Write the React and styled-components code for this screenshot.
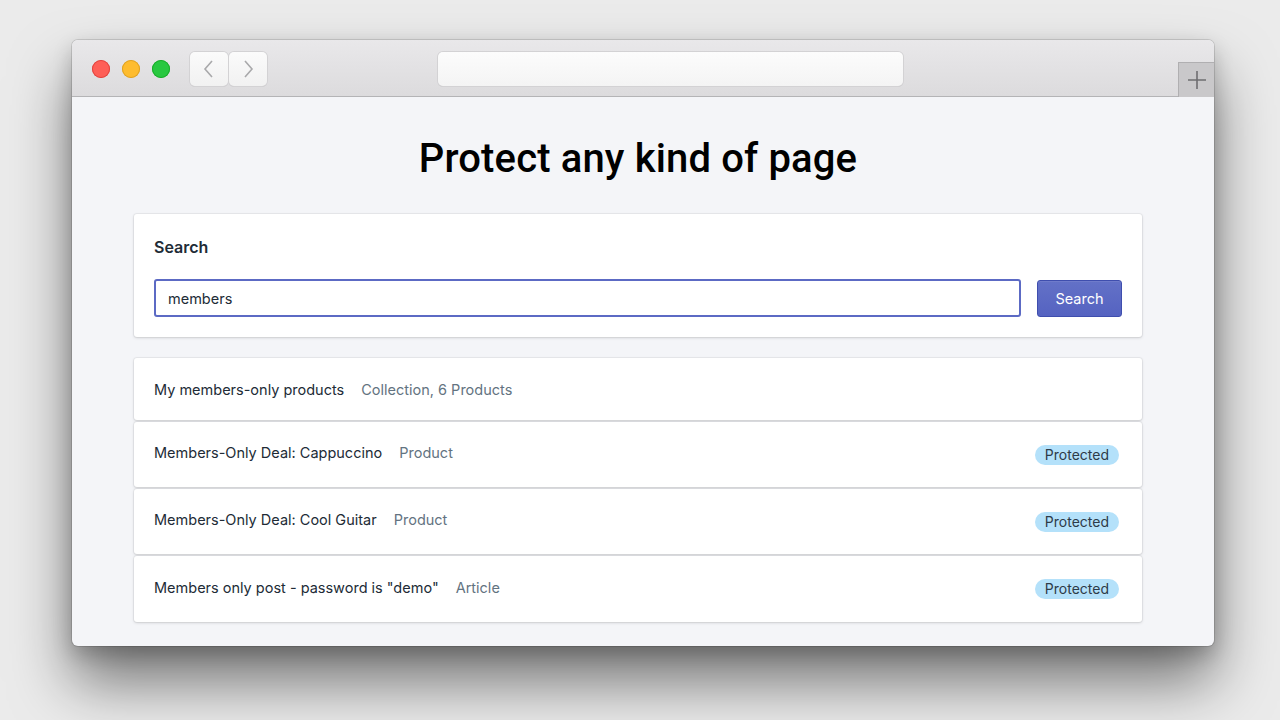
import React from 'react'
import styled, { createGlobalStyle } from 'styled-components'

const Global = createGlobalStyle`
  html, body { margin: 0; padding: 0; }
  body {
    background: #ebebeb;
    font-family: -apple-system, "Inter", "Liberation Sans", sans-serif;
    width: 1280px;
    height: 720px;
    overflow: hidden;
  }
`

const Stage = styled.div`
  padding: 40px 0 0 72px;
`

const Window = styled.div`
  width: 1142px;
  height: 606px;
  border-radius: 6px;
  overflow: hidden;
  background: #f4f5f8;
  box-shadow: 0 0 0 1px rgba(0,0,0,0.12), 0 36px 60px rgba(0,0,0,0.5), 0 8px 20px rgba(0,0,0,0.2);
  display: flex;
  flex-direction: column;
`

const TitleBar = styled.div`
  height: 57px;
  flex-shrink: 0;
  background: linear-gradient(#e9e8ea, #dcdbdd);
  border-bottom: 1px solid #b4b4b6;
  display: flex;
  align-items: flex-start;
  padding-left: 20px;
  box-sizing: border-box;
`

const Lights = styled.div`
  display: flex;
  gap: 12px;
  margin-top: 20px;
`

const Light = styled.span`
  width: 18px;
  height: 18px;
  border-radius: 50%;
  background: ${p => p.color};
  box-shadow: inset 0 0 0 1px ${p => p.edge};
`

const NavGroup = styled.div`
  display: flex;
  gap: 1px;
  margin: 12px 0 0 20px;
`

const NavButton = styled.div`
  width: 38px;
  height: 34px;
  border-radius: 5px;
  background: linear-gradient(#fbfbfb, #f1f1f1);
  box-shadow: 0 0 0 1px #d3d2d4, 0 1px 0 #c7c6c8;
  display: flex;
  align-items: center;
  justify-content: center;
`

const Address = styled.div`
  width: 465px;
  height: 34px;
  margin: 12px 0 0 171px;
  border-radius: 5px;
  background: linear-gradient(#fcfcfc, #f4f4f4);
  box-shadow: 0 0 0 1px #d3d2d4, 0 1px 0 #c7c6c8;
`

const NewTab = styled.div`
  margin-left: auto;
  margin-top: 22px;
  width: 36px;
  height: 35px;
  background: #c9c8ca;
  border-left: 1px solid #b0afb1;
  border-top: 1px solid #b0afb1;
  box-sizing: border-box;
  display: flex;
  align-items: center;
  justify-content: center;
`

const Content = styled.div`
  flex: 1;
  padding: 0 72px 0 62px;
`

const Heading = styled.h1`
  margin: 38px 0 31px;
  text-align: center;
  font-family: "Roboto", "DejaVu Sans", sans-serif;
  font-weight: 500;
  font-size: 40px;
  line-height: 48px;
  color: #000;
  letter-spacing: 0.15px;
`

const Card = styled.div`
  background: #fff;
  border-radius: 3px;
  box-shadow: 0 0 0 1px rgba(63,63,68,0.06), 0 1px 3px rgba(63,63,68,0.18);
`

const SearchCard = styled(Card)`
  padding: 23px 20px 20px;
  margin-bottom: 21px;
`

const Label = styled.div`
  font-size: 16px;
  font-weight: 600;
  color: #212b36;
  margin-bottom: 22px;
`

const SearchRow = styled.div`
  display: flex;
  align-items: center;
  gap: 16px;
`

const Input = styled.input`
  flex: 1;
  height: 38px;
  box-sizing: border-box;
  border: 2px solid #5c6ac4;
  border-radius: 3px;
  padding: 0 12px;
  font-family: inherit;
  font-size: 14.5px;
  color: #212b36;
  outline: none;
`

const Button = styled.button`
  width: 85px;
  height: 37px;
  border: 1px solid #3f4eae;
  border-radius: 3px;
  background: linear-gradient(#6371c7, #5563c1);
  color: #fff;
  font-family: inherit;
  font-size: 14.5px;
  box-shadow: inset 0 1px 0 #6f7bcb;
`

const List = styled.div`
  display: flex;
  flex-direction: column;
  gap: 2px;
`

const Row = styled(Card)`
  height: ${p => p.h}px;
  display: flex;
  align-items: center;
  padding: 0 23px 0 20px;
  box-sizing: border-box;
  font-size: 14.5px;
`

const Texts = styled.div`
  display: flex;
  gap: 17px;
  margin-bottom: ${p => p.raised ? '4px' : '0'};
`

const Name = styled.span`
  color: #212b36;
`

const Kind = styled.span`
  color: #637381;
`

const Badge = styled.span`
  margin-left: auto;
  background: #b4e1fa;
  color: #2e3b48;
  font-size: 14px;
  line-height: 20px;
  padding: 0 10px;
  border-radius: 10px;
`

const items = [
  { name: 'My members-only products', kind: 'Collection, 6 Products', h: 62 },
  { name: 'Members-Only Deal: Cappuccino', kind: 'Product', h: 65, protectedPage: true },
  { name: 'Members-Only Deal: Cool Guitar', kind: 'Product', h: 65, protectedPage: true },
  { name: 'Members only post - password is "demo"', kind: 'Article', h: 66, protectedPage: true },
]

const Chevron = ({ left }) => (
  <svg width="14" height="20" viewBox="0 0 14 20">
    <path d={left ? 'M10 2 L3 10 L10 18' : 'M4 2 L11 10 L4 18'} fill="none" stroke="#a9a9ab" strokeWidth="1.6" />
  </svg>
)

const App = () => {
  return (
    <>
      <Global />
      <Stage>
        <Window>
          <TitleBar>
            <Lights>
              <Light color="#fe5f57" edge="#e0443e" />
              <Light color="#febc2e" edge="#dea123" />
              <Light color="#28c840" edge="#1aab29" />
            </Lights>
            <NavGroup>
              <NavButton><Chevron left /></NavButton>
              <NavButton><Chevron /></NavButton>
            </NavGroup>
            <Address />
            <NewTab>
              <svg width="20" height="20" viewBox="0 0 20 20">
                <path d="M10 1 V19 M1 10 H19" stroke="#6e6d70" strokeWidth="1.6" />
              </svg>
            </NewTab>
          </TitleBar>
          <Content>
            <Heading>Protect any kind of page</Heading>
            <SearchCard>
              <Label>Search</Label>
              <SearchRow>
                <Input defaultValue="members" />
                <Button>Search</Button>
              </SearchRow>
            </SearchCard>
            <List>
              {items.map(item => (
                <Row key={item.name} h={item.h}>
                  <Texts raised={item.protectedPage}>
                    <Name>{item.name}</Name>
                    <Kind>{item.kind}</Kind>
                  </Texts>
                  {item.protectedPage && <Badge>Protected</Badge>}
                </Row>
              ))}
            </List>
          </Content>
        </Window>
      </Stage>
    </>
  )
}

export default App
